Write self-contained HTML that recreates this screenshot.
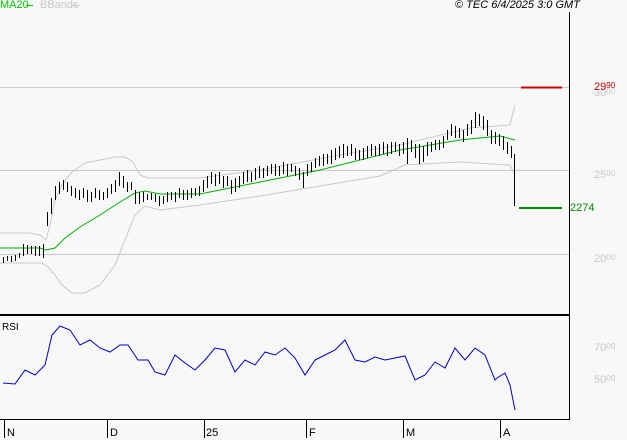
<!DOCTYPE html>
<html><head><style>
body{margin:0;background:#f8f8f8;width:627px;height:440px;overflow:hidden;font-family:"Liberation Sans",sans-serif}
.t{position:absolute;font-size:11px;line-height:11px}
.g{color:#c8c8c8}
sup{font-size:8px;vertical-align:top;line-height:8px}
</style></head><body>
<svg width="627" height="440" style="position:absolute;left:0;top:0">
<g stroke="#c8c8c8" stroke-width="1">
<line x1="0" y1="87.5" x2="569" y2="87.5"/>
<line x1="0" y1="170.5" x2="569" y2="170.5"/>
<line x1="0" y1="254.5" x2="569" y2="254.5"/>
</g>
<polyline fill="none" stroke="#c8c8c8" points="0,233 30,233 40,235 46,240 50,225 55,200 62,185 72,172 85,163 100,160 115,157 125,157 133,162 140,175 148,178 200,178 260,170 340,155 400,145 470,128 510,125 515,105"/>
<polyline fill="none" stroke="#c8c8c8" points="0,263 42,263 48,267 55,275 62,285 72,293 85,293 100,285 115,265 125,240 135,215 145,206 160,210 200,205 260,196 320,186 380,176 405,165 460,162 510,165 515,175"/>
<polyline fill="none" stroke="#00b000" points="0,248 40,248 46,250 55,248 65,238 80,227 100,215 120,202 135,193 145,191 160,194 200,194 260,182 320,170 400,150 460,140 500,136 515,140"/>
<path transform="translate(0.5,0)" shape-rendering="crispEdges" fill="none" stroke="#000" stroke-width="1" d="M3 257V263M7 256V261M11 256V262M15 255V261M19 253V258M23 244V256M27 245V254M31 246V254M35 246V256M39 246V256M43 244V258M47 212V226M51 198V214M55 186V200M59 182V194M63 180V190M67 182V192M71 186V196M75 188V198M79 190V200M83 188V198M87 190V202M91 192V202M95 188V198M99 190V200M103 192V200M107 188V198M111 184V194M115 180V192M119 172V186M123 176V188M127 182V192M131 182V190M135 190V204M139 192V204M143 192V202M147 194V200M151 193V200M155 194V202M159 196V206M163 196V204M167 192V202M171 192V200M175 192V202M179 188V198M183 190V200M187 190V200M191 188V198M195 188V196M199 186V196M203 180V192M207 176V188M211 172V184M215 174V186M219 172V184M223 176V188M227 176V186M231 180V194M235 178V192M239 176V188M243 172V184M247 170V182M251 172V182M255 168V180M259 166V178M263 168V178M267 166V176M271 164V174M275 164V176M279 166V176M283 162V174M287 164V176M291 164V172M295 166V176M299 168V180M303 172V188M307 164V176M311 162V172M315 158V168M319 156V166M323 154V166M327 154V164M331 150V164M335 148V160M339 146V158M343 144V158M347 146V156M351 144V156M355 148V160M359 150V160M363 148V160M367 146V158M371 144V156M375 146V156M379 144V156M383 142V154M387 144V156M391 142V154M395 142V152M399 144V156M403 142V154M407 138V164M411 140V152M415 144V158M419 144V164M423 146V162M427 142V156M431 142V152M435 140V150M439 140V150M443 136V148M447 130V140M451 124V136M455 126V138M459 128V138M463 130V142M467 124V136M471 120V134M475 112V128M479 114V126M483 116V130M487 120V136M491 130V144M495 132V144M499 134V146M503 136V150M507 142V154M511 146V158M514 154V206"/>
<line x1="521" y1="87.5" x2="562" y2="87.5" stroke="#d00000" stroke-width="2"/>
<line x1="519" y1="208" x2="562" y2="208" stroke="#009000" stroke-width="2"/>
<polyline fill="none" stroke="#0000d0" points="3,383 15,384 25,370 35,375 45,365 52,335 60,326 70,330 80,345 90,340 100,348 110,352 120,345 128,345 138,360 148,360 155,372 165,375 175,355 185,363 195,370 205,360 215,348 225,350 235,372 245,360 255,365 265,352 275,355 285,348 295,358 305,375 315,360 325,355 335,350 345,340 355,360 365,362 375,357 385,360 395,358 405,356 415,380 425,375 435,362 445,368 455,348 465,360 475,348 485,355 495,380 497,378 505,373 510,385 515,410"/>
<line x1="569.5" y1="12" x2="569.5" y2="419" stroke="#000"/>
<line x1="0" y1="315" x2="570" y2="315" stroke="#000" stroke-width="2"/>
<line x1="0" y1="419.5" x2="570" y2="419.5" stroke="#000"/>
<g stroke="#000"><line x1="4.5" y1="419" x2="4.5" y2="438"/><line x1="107.5" y1="419" x2="107.5" y2="438"/><line x1="204.5" y1="419" x2="204.5" y2="438"/><line x1="306.5" y1="419" x2="306.5" y2="438"/><line x1="403.5" y1="419" x2="403.5" y2="438"/><line x1="500.5" y1="419" x2="500.5" y2="438"/></g>
<line x1="26" y1="5.5" x2="33" y2="5.5" stroke="#00c000"/>
<line x1="71" y1="5.5" x2="80" y2="5.5" stroke="#c8c8c8"/>
</svg>
<div class="t" style="left:0;top:0;color:#00c000">MA20</div>
<div class="t g" style="top:0;left:40px">BBands</div>
<div class="t" style="left:455px;top:0;font-style:italic">© TEC 6/4/2025 3:0 GMT</div>
<div class="t g" style="left:594px;top:88px">30<sup>00</sup></div>
<div class="t" style="left:594px;top:82px;color:#d00000">29<sup>90</sup></div>
<div class="t g" style="left:594px;top:170px">25<sup>00</sup></div>
<div class="t" style="left:570px;top:203px;color:#009000">2274</div>
<div class="t g" style="left:594px;top:254px">20<sup>00</sup></div>
<div class="t g" style="left:594px;top:343px">70<sup>00</sup></div>
<div class="t g" style="left:594px;top:375px">50<sup>00</sup></div>
<div class="t" style="left:2px;top:322px;font-size:10px">RSI</div>
<div class="t" style="left:7px;top:428px">N</div>
<div class="t" style="left:110px;top:428px">D</div>
<div class="t" style="left:206px;top:428px">25</div>
<div class="t" style="left:309px;top:428px">F</div>
<div class="t" style="left:406px;top:428px">M</div>
<div class="t" style="left:503px;top:428px">A</div>
</body></html>
